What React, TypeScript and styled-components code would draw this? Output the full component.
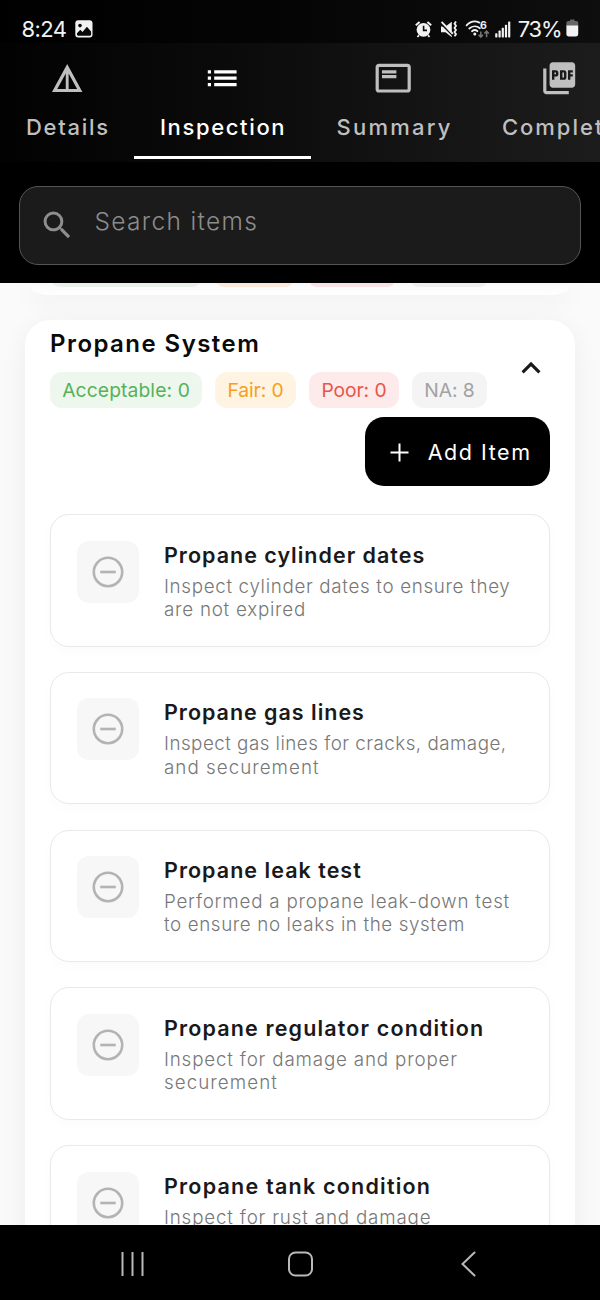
import React from 'react';
import styled, { createGlobalStyle } from 'styled-components';

const GlobalStyle = createGlobalStyle`
  * { box-sizing: border-box; }
  html, body { margin: 0; padding: 0; background: #000; }
  body { font-family: Inter, "Liberation Sans", sans-serif; }
  button { font: inherit; border: 0; padding: 0; background: none; }
`;

const Screen = styled.main`
  width: 600px;
  height: 1300px;
  display: flex;
  flex-direction: column;
  overflow: hidden;
  background: #000;
`;

const Spaced = styled.span<{ $ls: number }>`
  display: block;
  white-space: nowrap;
  letter-spacing: ${(p) => p.$ls}px;
  margin-right: ${(p) => -p.$ls}px;
`;

/* ---------- Status bar ---------- */

const StatusBar = styled.header`
  flex: none;
  height: 43px;
  padding: 15px 21px 0 21.5px;
  display: flex;
  align-items: flex-start;
  justify-content: space-between;
  color: #f2f2f2;
  background: linear-gradient(90deg, #000 0%, #050505 50%, #0e0e0e 100%);
`;

const StatusGroup = styled.div<{ $gap: number }>`
  display: flex;
  align-items: center;
  gap: ${(p) => p.$gap}px;
  height: 28px;
`;

const StatusText = styled(Spaced)`
  font-size: 22px;
  line-height: 28px;
`;

const StatusIcons = styled.svg`
  display: block;
  margin-right: 3.5px;
`;

const Glyph = styled.svg`
  display: block;
  margin-bottom: 1px;
`;

/* ---------- Tabs ---------- */

const TabBar = styled.nav`
  flex: none;
  height: 119px;
  display: flex;
  overflow: hidden;
  background: linear-gradient(90deg, #020202 0%, #0b0b0b 40%, #141414 70%, #1c1c1c 100%);
`;

const Tab = styled.button<{ $width: number; $active?: boolean }>`
  flex: none;
  width: ${(p) => p.$width}px;
  height: 116px;
  padding-top: 15.5px;
  display: flex;
  flex-direction: column;
  align-items: center;
  gap: 15px;
  color: ${(p) => (p.$active ? '#fff' : '#bfbfbf')};
  border-bottom: 3px solid ${(p) => (p.$active ? '#fff' : 'transparent')};
`;

const TabIcon = styled.svg`
  flex: none;
  display: block;
  width: 38.4px;
  height: 38.4px;
  fill: currentColor;
`;

const TabLabel = styled(Spaced)`
  font-size: 22px;
  font-weight: 500;
  line-height: 30px;
`;

/* ---------- Search ---------- */

const SearchSection = styled.section`
  flex: none;
  height: 121px;
  padding: 24px 19px 0;
  background: #000;
`;

const SearchField = styled.div`
  height: 78.5px;
  padding: 0 23px 0 19px;
  display: flex;
  align-items: center;
  gap: 19px;
  border: 1.5px solid #555;
  border-radius: 19px;
  background: #1b1b1b;
  color: #8c8c8c;
`;

const SearchIcon = styled.svg`
  flex: none;
  width: 36.5px;
  height: 36.5px;
  fill: #8e8e8e;
`;

const SearchHint = styled(Spaced)`
  padding-bottom: 8px;
  font-size: 24.5px;
  font-weight: 300;
  line-height: 30px;
`;

/* ---------- Scrolling content ---------- */

const Content = styled.section`
  flex: none;
  height: 942px;
  padding: 0 25px;
  overflow: hidden;
  background: #fafafa;
`;

const SectionCard = styled.article`
  background: #fff;
  border-radius: 25px;
  box-shadow: 0 6px 26px rgba(0, 0, 0, 0.06);
`;

const PreviousCard = styled(SectionCard)`
  height: 12px;
  margin: 0 3px 25px;
  padding: 0 25px;
  display: flex;
  gap: 18px;
  border-radius: 0 0 22px 22px / 0 0 12px 12px;
  background: linear-gradient(#f8f8f8, #fff);
`;

const ChipEdge = styled.span<{ $width: number; $bg: string }>`
  flex: none;
  width: ${(p) => p.$width}px;
  height: 4px;
  border-radius: 0 0 8px 8px / 0 0 4px 4px;
  background: ${(p) => p.$bg};
`;

const MainCard = styled(SectionCard)`
  height: 1100px;
  padding: 8px 25px 0;
`;

const SectionHeader = styled.div`
  display: flex;
  justify-content: space-between;
`;

const SectionTitle = styled(Spaced)`
  margin-top: 0;
  margin-bottom: 0;
  font-size: 24px;
  font-weight: 600;
  line-height: 31px;
  color: #0a0a0a;
`;

const Chips = styled.div`
  display: flex;
  gap: 13px;
  margin-top: 13px;
`;

const Chip = styled.span<{ $width: number; $bg: string; $color: string }>`
  width: ${(p) => p.$width}px;
  height: 35.5px;
  padding-top: 0.5px;
  display: flex;
  align-items: center;
  justify-content: center;
  border-radius: 12px;
  background: ${(p) => p.$bg};
  color: ${(p) => p.$color};
  font-size: 19.3px;
  font-weight: 370;
`;

const Chevron = styled.svg`
  display: block;
  flex: none;
  width: 38px;
  height: 38px;
  margin-top: 21px;
`;

const AddRow = styled.div`
  display: flex;
  justify-content: flex-end;
  margin: 9.5px 0 28px;
`;

const AddButton = styled.button`
  width: 185px;
  height: 69px;
  padding: 1px 20px 0 25px;
  display: flex;
  align-items: center;
  justify-content: space-between;
  border-radius: 19px;
  background: #000;
  color: #fff;
  font-size: 21.5px;
  font-weight: 400;
  line-height: 30px;
`;

const Items = styled.div`
  display: flex;
  flex-direction: column;
  gap: 25.25px;
`;

const ItemCard = styled.div`
  height: 132.5px;
  padding: 25.5px 25px 0 25.5px;
  display: flex;
  gap: 25.5px;
  border: 1.5px solid #e9e9e9;
  border-radius: 19px;
  background: #fff;
  box-shadow: 0 4px 13px rgba(0, 0, 0, 0.02);
`;

const StatusTile = styled.div`
  flex: none;
  width: 62px;
  height: 62px;
  display: grid;
  place-items: center;
  border-radius: 12px;
  background: #f7f7f7;
`;

const ItemTitle = styled(Spaced)`
  font-size: 21.5px;
  font-weight: 600;
  line-height: 28px;
  color: #191919;
`;

const ItemLine = styled(Spaced)`
  font-size: 18.8px;
  font-weight: 350;
  line-height: 23.3px;
  color: #777;
`;

const ItemDescription = styled.div`
  margin-top: 6px;
`;

/* ---------- System navigation ---------- */

const SystemNav = styled.footer`
  flex: 1;
  display: flex;
  align-items: center;
  gap: 142px;
  padding: 2px 0 0 119px;
  background: #000;
`;

type Line = { text: string; ls: number };
type Item = { title: string; ls: number; lines: Line[] };

const items: Item[] = [
  {
    title: 'Propane cylinder dates',
    ls: 1.0,
    lines: [
      { text: 'Inspect cylinder dates to ensure they', ls: 0.67 },
      { text: 'are not expired', ls: 0.75 },
    ],
  },
  {
    title: 'Propane gas lines',
    ls: 0.98,
    lines: [
      { text: 'Inspect gas lines for cracks, damage,', ls: 0.48 },
      { text: 'and securement', ls: 1.02 },
    ],
  },
  {
    title: 'Propane leak test',
    ls: 1.03,
    lines: [
      { text: 'Performed a propane leak-down test', ls: 0.77 },
      { text: 'to ensure no leaks in the system', ls: 0.61 },
    ],
  },
  {
    title: 'Propane regulator condition',
    ls: 1.15,
    lines: [
      { text: 'Inspect for damage and proper', ls: 0.82 },
      { text: 'securement', ls: 1.05 },
    ],
  },
  {
    title: 'Propane tank condition',
    ls: 1.22,
    lines: [{ text: 'Inspect for rust and damage', ls: 0.82 }],
  },
];

const chips = [
  { text: 'Acceptable: 0', width: 152, ls: 0.1, bg: '#edf7ee', color: '#55b259' },
  { text: 'Fair: 0', width: 81, ls: -0.1, bg: '#fff3e2', color: '#f5a021' },
  { text: 'Poor: 0', width: 90, ls: -0.1, bg: '#fdeaea', color: '#e8554c' },
  { text: 'NA: 8', width: 75, ls: -0.1, bg: '#f4f4f4', color: '#a2a2a2' },
];

const PictureIcon = () => (
  <Glyph width="18" height="18" viewBox="0 0 18 18">
    <rect x="0.3" y="0.3" width="17.2" height="17.2" rx="3" fill="#f2f2f2" />
    <circle cx="5" cy="5.6" r="1.8" fill="#080808" />
    <path d="M2 13.2 5.3 9.8l2.2 2.1 4.4-5.2 4.2 4.8v3.1c0 .7-.4 1.1-1.1 1.1H3.1c-.7 0-1.1-.4-1.1-1.1z" fill="#080808" />
  </Glyph>
);

const SystemIcons = () => (
  <StatusIcons width="97" height="20" viewBox="414 18 97 20" fill="none">
    <g stroke="#f2f2f2">
      <circle cx="423.5" cy="28.8" r="6.9" fill="#f2f2f2" stroke="none" />
      <path d="M415.8 24.2l3.8-3.2M431.2 24.2l-3.8-3.2" strokeWidth="2" />
      <path d="M419 34.3l-1.6 1.6M428 34.3l1.6 1.6" strokeWidth="1.8" />
      <path d="M423.6 24.8v4.6h3.4" stroke="#0c0c0c" strokeWidth="1.6" />
    </g>
    <path d="M441 25.5h4.5l6.3-4.8v15.6l-6.3-5h-4.5z" fill="#f2f2f2" />
    <path d="M440 21.5l13 13" stroke="#0c0c0c" strokeWidth="2" />
    <path d="M441.6 20.8l11.2 12" stroke="#f2f2f2" strokeWidth="1.9" />
    <path d="M456 20.6l-1.5 2.1 1.5 2.1-1.5 2.1 1.5 2.1-1.5 2.1 1.5 2.1-1.5 2.1" stroke="#f2f2f2" strokeWidth="1.8" />
    <g stroke="#f2f2f2" strokeWidth="1.8" strokeLinecap="round">
      <path d="M466.6 24.3c4-4.1 9-4.5 12.7-2.7" />
      <path d="M469.3 27.5c3.2-2.9 7.4-2.9 10.6-.3" />
      <path d="M472 30.2c1.8-1.5 3.8-1.5 5.4 0" />
    </g>
    <circle cx="474.8" cy="33" r="1.5" fill="#f2f2f2" />
    <text x="480" y="28" fontSize="10.5" fontWeight="700" fontFamily="Inter, sans-serif" fill="#f2f2f2">6</text>
    <path d="M480.8 30.5v5.4M478.6 33.7l2.2 2.4 2.2-2.4M486.6 36.2v-5.8M484.4 32.6l2.2-2.4 2.2 2.4" stroke="#777" strokeWidth="1.5" />
    <g fill="#f2f2f2">
      <rect x="495.2" y="32.2" width="2.2" height="4.2" rx=".6" />
      <rect x="498.5" y="29.6" width="2.2" height="6.8" rx=".6" />
      <rect x="501.7" y="26.8" width="2.2" height="9.6" rx=".6" />
      <rect x="504.9" y="23.8" width="2.2" height="12.6" rx=".6" />
      <rect x="508.1" y="20.4" width="2.2" height="16" rx=".6" />
    </g>
  </StatusIcons>
);

const BatteryIcon = () => (
  <Glyph width="13" height="19" viewBox="0 0 13 19">
    <path d="M4 1.2C4 .7 4.3.4 4.8.4h3c.5 0 .8.3.8.8V2h1.6c1.2 0 2 .8 2 2v3H.4V4c0-1.2.8-2 2-2H4z" fill="#666" />
    <path d="M.4 6.4h11.8V15c0 1.5-.9 2.4-2.4 2.4h-7C1.3 17.4.4 16.5.4 15z" fill="#f2f2f2" />
  </Glyph>
);

const MinusCircle = () => (
  <svg width="32" height="32" viewBox="0 0 32 32" fill="none" stroke="#b3b3b3" strokeWidth="2.6">
    <circle cx="16" cy="16" r="14.2" />
    <path d="M8.2 16h15.6" />
  </svg>
);

export default function App() {
  return (
    <>
      <GlobalStyle />
      <Screen>
        <StatusBar>
          <StatusGroup $gap={8.5}>
            <StatusText $ls={-0.6}>8:24</StatusText>
            <PictureIcon />
          </StatusGroup>
          <StatusGroup $gap={3.5}>
            <SystemIcons />
            <StatusText $ls={-1.2}>73%</StatusText>
            <BatteryIcon />
          </StatusGroup>
        </StatusBar>

        <TabBar>
          <Tab $width={134}>
            <TabIcon viewBox="0 0 24 24">
              <path d="M2.5 20.7h19L12 3.2zm8.6-2H5.8l5.3-9.7zm1.8 0V9l5.3 9.7z" />
            </TabIcon>
            <TabLabel $ls={1.7}>Details</TabLabel>
          </Tab>
          <Tab $width={176.5} $active>
            <TabIcon viewBox="0 0 24 24">
              <path d="M3 13h2v-2H3zm0 4h2v-2H3zm0-8h2V7H3zm4 4h14v-2H7zm0 4h14v-2H7zM7 7v2h14V7z" />
            </TabIcon>
            <TabLabel $ls={1.65}>Inspection</TabLabel>
          </Tab>
          <Tab $width={166}>
            <TabIcon viewBox="0 0 24 24">
              <path d="M21 3H3c-1.1 0-2 .9-2 2v14c0 1.1.9 2 2 2h18c1.1 0 2-.9 2-2V5c0-1.1-.9-2-2-2zm0 16H3V5h18zM5 10h9v2H5zm0-3h9v2H5z" />
            </TabIcon>
            <TabLabel $ls={2.25}>Summary</TabLabel>
          </Tab>
          <Tab $width={166}>
            <TabIcon viewBox="0 0 24 24">
              <path d="M20 2H8c-1.1 0-2 .9-2 2v12c0 1.1.9 2 2 2h12c1.1 0 2-.9 2-2V4c0-1.1-.9-2-2-2zm-8.5 7.5c0 .83-.67 1.5-1.5 1.5H9v2H7.5V7H10c.83 0 1.5.67 1.5 1.5v1zm5 2c0 .83-.67 1.5-1.5 1.5h-2.5V7H15c.83 0 1.5.67 1.5 1.5v3zm4-3H19v1h1.5V11H19v2h-1.5V7h3v1.5zM9 9.5h1v-1H9v1zM4 6H2v14c0 1.1.9 2 2 2h14v-2H4V6zm10 5.5h1v-3h-1v3z" />
            </TabIcon>
            <TabLabel $ls={2}>Complete</TabLabel>
          </Tab>
        </TabBar>

        <SearchSection>
          <SearchField>
            <SearchIcon viewBox="0 0 24 24">
              <path d="M15.5 14h-.79l-.28-.27A6.471 6.471 0 0 0 16 9.5 6.5 6.5 0 1 0 9.5 16c1.61 0 3.09-.59 4.23-1.57l.27.28v.79l5 4.99L20.49 19l-4.99-5zm-6 0C7.01 14 5 11.99 5 9.5S7.01 5 9.5 5 14 7.01 14 9.5 11.99 14 9.5 14z" />
            </SearchIcon>
            <SearchHint $ls={1.32}>Search items</SearchHint>
          </SearchField>
        </SearchSection>

        <Content>
          <PreviousCard>
            <ChipEdge $width={146} $bg="#e9efe9" />
            <ChipEdge $width={75} $bg="#fae9da" />
            <ChipEdge $width={84} $bg="#f8e1e3" />
            <ChipEdge $width={74} $bg="#eeeeee" />
          </PreviousCard>
          <MainCard>
            <SectionHeader>
              <div>
                <SectionTitle as="h2" $ls={1.45}>Propane System</SectionTitle>
                <Chips>
                  {chips.map((c) => (
                    <Chip key={c.text} $width={c.width} $bg={c.bg} $color={c.color}>
                      <Spaced $ls={c.ls}>{c.text}</Spaced>
                    </Chip>
                  ))}
                </Chips>
              </div>
              <Chevron viewBox="0 0 24 24" fill="#1a1a1a">
                <path d="M12 8l-6 6 1.41 1.41L12 10.83l4.59 4.58L18 14z" />
              </Chevron>
            </SectionHeader>
            <AddRow>
              <AddButton>
                <svg width="19" height="19" viewBox="0 0 19 19" stroke="#fff" strokeWidth="2">
                  <path d="M9.5.5v18M.5 9.5h18" />
                </svg>
                <Spaced $ls={1.55}>Add Item</Spaced>
              </AddButton>
            </AddRow>
            <Items>
              {items.map((item) => (
                <ItemCard key={item.title}>
                  <StatusTile>
                    <MinusCircle />
                  </StatusTile>
                  <div>
                    <ItemTitle $ls={item.ls}>{item.title}</ItemTitle>
                    <ItemDescription>
                      {item.lines.map((line) => (
                        <ItemLine key={line.text} $ls={line.ls}>{line.text}</ItemLine>
                      ))}
                    </ItemDescription>
                  </div>
                </ItemCard>
              ))}
            </Items>
          </MainCard>
        </Content>

        <SystemNav>
          <svg width="27" height="26" viewBox="0 0 27 26" stroke="#b9b9b9" strokeWidth="2">
            <path d="M3.5 1v24M13.5 1v24M23.5 1v24" />
          </svg>
          <svg width="26" height="26" viewBox="0 0 26 26" fill="none" stroke="#b9b9b9" strokeWidth="2">
            <rect x="1" y="1.5" width="23" height="23" rx="6.5" />
          </svg>
          <svg width="20" height="26" viewBox="0 0 20 26" fill="none" stroke="#b9b9b9" strokeWidth="2" strokeLinecap="round">
            <path d="M18.5 1.500 6.500 13l12 11.500" />
          </svg>
        </SystemNav>
      </Screen>
    </>
  );
}
